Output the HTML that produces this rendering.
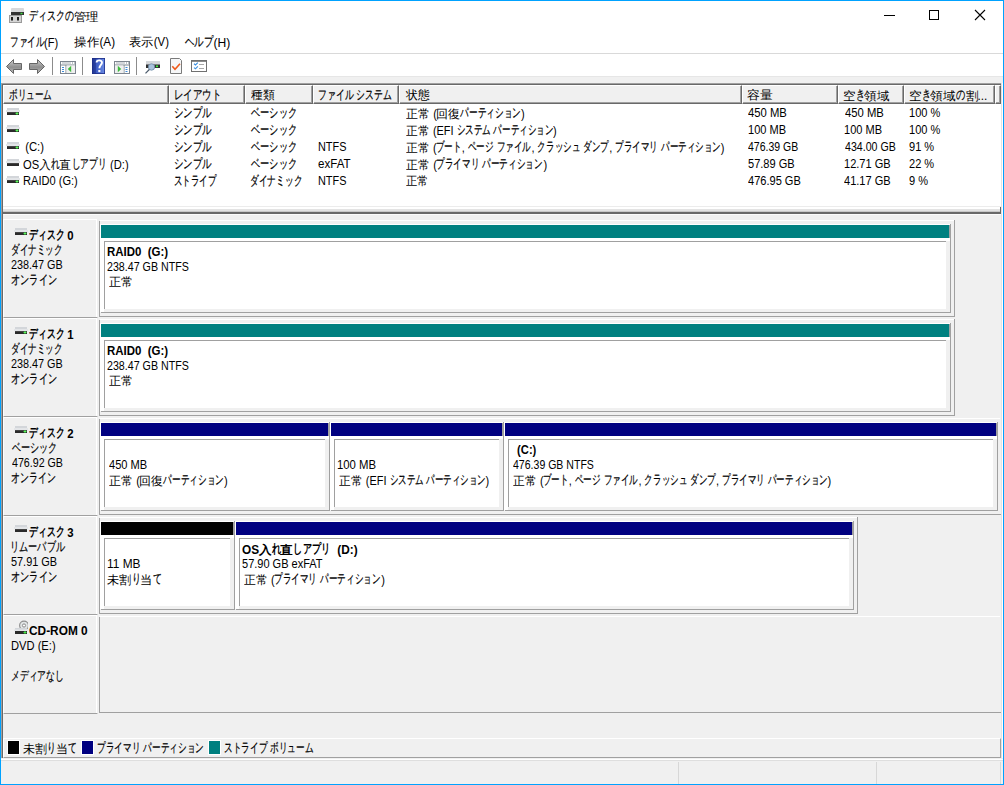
<!DOCTYPE html>
<html><head><meta charset="utf-8"><style>
html,body{margin:0;padding:0}
body{width:1004px;height:785px;position:relative;overflow:hidden;background:#f0f0f0;font-family:"Liberation Sans",sans-serif;font-size:12px;color:#000}
body>div,body>span,body>svg{position:absolute}
.t{position:absolute;white-space:pre;line-height:15px;height:15px;transform-origin:0 0}
.t i{font-style:normal;display:inline-block;transform-origin:0 0}
.t i.k{font-size:13px;-webkit-text-stroke:0.2px #000;position:relative;top:-1px}
.t[style*=bold] i.k,.t[style*=bold] i.h{-webkit-text-stroke:0}
.t i.h{font-size:12px;position:relative;top:0px}
#win{left:0;top:0;width:1004px;height:785px;box-sizing:border-box;border:1px solid #00a2ff;z-index:10;pointer-events:none}
</style></head><body>
<div style="left:1px;top:1px;width:1002px;height:52px;background:#fff"></div>
<div style="left:1px;top:53px;width:1002px;height:1px;background:#d9d9d9"></div>
<div style="left:1px;top:54px;width:1002px;height:22px;background:#fff"></div>
<div style="left:1px;top:76px;width:1002px;height:1px;background:#e6e6e6"></div>
<svg style="position:absolute;left:8px;top:7px" width="18" height="17" viewBox="0 0 18 17">
<rect x="3" y="1" width="13" height="4.5" rx="1" fill="#d8d9db"/>
<rect x="3" y="5" width="13" height="3" fill="#333"/>
<rect x="12.5" y="5.8" width="2" height="1.4" fill="#3fe03f"/>
<rect x="1.5" y="8.5" width="12" height="7" fill="#d4d4d4" stroke="#9a9a9a" stroke-width="1"/>
<rect x="3" y="10" width="2" height="3.5" fill="#1e1e1e"/>
<rect x="9" y="10" width="2" height="3.5" fill="#1e1e1e"/>
</svg>
<span class="t" style="left:29.30px;top:9px;transform:scaleX(1.0466);"><i class="k" style="transform:scaleX(0.6615);margin-right:-22.00px">ディスクの</i><i class="h" style="transform:scaleX(0.9833);margin-right:-0.40px">管理</i></span>
<div style="left:884px;top:15px;width:11px;height:1px;background:#000"></div>
<div style="left:929px;top:10px;width:8px;height:8px;border:1px solid #000;background:transparent"></div>
<svg style="position:absolute;left:974px;top:9px" width="12" height="12" viewBox="0 0 12 12">
<path d="M1 1 L11 11 M11 1 L1 11" stroke="#000" stroke-width="1.1"/></svg>
<span class="t" style="left:10.30px;top:35px;transform:scaleX(1.0005);"><i class="k" style="transform:scaleX(0.6615);margin-right:-17.60px">ファイル</i><i style="transform:scaleX(0.92);margin-right:-1.23px">(F)</i></span>
<span class="t" style="left:74.16px;top:35px;transform:scaleX(1.0598);"><i class="h" style="transform:scaleX(0.9833);margin-right:-0.40px">操作</i><i style="transform:scaleX(0.92);margin-right:-1.28px">(A)</i></span>
<span class="t" style="left:129.46px;top:35px;transform:scaleX(1.0328);"><i class="h" style="transform:scaleX(0.9833);margin-right:-0.40px">表示</i><i style="transform:scaleX(0.92);margin-right:-1.28px">(V)</i></span>
<span class="t" style="left:185.30px;top:35px;transform:scaleX(1.0978);"><i class="k" style="transform:scaleX(0.6615);margin-right:-13.20px">ヘルプ</i><i style="transform:scaleX(0.92);margin-right:-1.33px">(H)</i></span>
<div style="left:1px;top:83px;width:1002px;height:1px;background:#a0a0a0"></div>
<div style="left:2px;top:84px;width:1000px;height:1px;background:#696969"></div>
<div style="left:1px;top:83px;width:1px;height:675px;background:#a0a0a0"></div>
<div style="left:2px;top:84px;width:1px;height:674px;background:#696969"></div>
<div style="left:1001px;top:83px;width:1px;height:675px;background:#e3e3e3"></div>
<div style="left:1002px;top:83px;width:1px;height:675px;background:#fff"></div>
<div style="left:3px;top:85px;width:998px;height:121px;background:#fff"></div>
<div style="left:3px;top:85px;width:166px;height:19px;box-sizing:border-box;background:#f0f0f0;border-top:1px solid #fff;border-left:1px solid #fff;border-right:1px solid #696969;border-bottom:1px solid #696969;box-shadow:inset -1px -1px 0 #a0a0a0"></div>
<div style="left:169px;top:85px;width:76px;height:19px;box-sizing:border-box;background:#f0f0f0;border-top:1px solid #fff;border-left:1px solid #fff;border-right:1px solid #696969;border-bottom:1px solid #696969;box-shadow:inset -1px -1px 0 #a0a0a0"></div>
<div style="left:245px;top:85px;width:68px;height:19px;box-sizing:border-box;background:#f0f0f0;border-top:1px solid #fff;border-left:1px solid #fff;border-right:1px solid #696969;border-bottom:1px solid #696969;box-shadow:inset -1px -1px 0 #a0a0a0"></div>
<div style="left:313px;top:85px;width:86px;height:19px;box-sizing:border-box;background:#f0f0f0;border-top:1px solid #fff;border-left:1px solid #fff;border-right:1px solid #696969;border-bottom:1px solid #696969;box-shadow:inset -1px -1px 0 #a0a0a0"></div>
<div style="left:399px;top:85px;width:343px;height:19px;box-sizing:border-box;background:#f0f0f0;border-top:1px solid #fff;border-left:1px solid #fff;border-right:1px solid #696969;border-bottom:1px solid #696969;box-shadow:inset -1px -1px 0 #a0a0a0"></div>
<div style="left:742px;top:85px;width:96px;height:19px;box-sizing:border-box;background:#f0f0f0;border-top:1px solid #fff;border-left:1px solid #fff;border-right:1px solid #696969;border-bottom:1px solid #696969;box-shadow:inset -1px -1px 0 #a0a0a0"></div>
<div style="left:838px;top:85px;width:66px;height:19px;box-sizing:border-box;background:#f0f0f0;border-top:1px solid #fff;border-left:1px solid #fff;border-right:1px solid #696969;border-bottom:1px solid #696969;box-shadow:inset -1px -1px 0 #a0a0a0"></div>
<div style="left:904px;top:85px;width:91px;height:19px;box-sizing:border-box;background:#f0f0f0;border-top:1px solid #fff;border-left:1px solid #fff;border-right:1px solid #696969;border-bottom:1px solid #696969;box-shadow:inset -1px -1px 0 #a0a0a0"></div>
<div style="left:995px;top:85px;width:6px;height:19px;box-sizing:border-box;background:#f0f0f0;border-top:1px solid #fff;border-left:1px solid #fff;border-right:1px solid #696969;border-bottom:1px solid #696969;box-shadow:inset -1px -1px 0 #a0a0a0"></div>
<span class="t" style="left:9.00px;top:88px;"><i class="k" style="transform:scaleX(0.6615);margin-right:-22.00px">ボリューム</i></span>
<span class="t" style="left:174.30px;top:88px;transform:scaleX(1.1003);"><i class="k" style="transform:scaleX(0.6615);margin-right:-22.00px">レイアウト</i></span>
<span class="t" style="left:251.00px;top:88px;transform:scaleX(1.0009);"><i class="h" style="transform:scaleX(0.9833);margin-right:-0.40px">種類</i></span>
<span class="t" style="left:318.30px;top:88px;transform:scaleX(1.0286);"><i class="k" style="transform:scaleX(0.6615);margin-right:-17.60px">ファイル</i><i style="transform:scaleX(0.92);margin-right:-0.27px"> </i><i class="k" style="transform:scaleX(0.6615);margin-right:-17.60px">システム</i></span>
<span class="t" style="left:405.70px;top:88px;"><i class="h" style="transform:scaleX(0.9833);margin-right:-0.40px">状態</i></span>
<span class="t" style="left:747.44px;top:88px;transform:scaleX(1.0919);"><i class="h" style="transform:scaleX(0.9833);margin-right:-0.40px">容量</i></span>
<span class="t" style="left:843.30px;top:88px;transform:scaleX(1.0621);"><i class="h" style="transform:scaleX(0.9833);margin-right:-0.20px">空</i><i class="k" style="transform:scaleX(0.6615);margin-right:-4.40px">き</i><i class="h" style="transform:scaleX(0.9833);margin-right:-0.40px">領域</i></span>
<span class="t" style="left:909.30px;top:88px;transform:scaleX(1.0704);"><i class="h" style="transform:scaleX(0.9833);margin-right:-0.20px">空</i><i class="k" style="transform:scaleX(0.6615);margin-right:-4.40px">き</i><i class="h" style="transform:scaleX(0.9833);margin-right:-0.40px">領域</i><i class="k" style="transform:scaleX(0.6615);margin-right:-4.40px">の</i><i class="h" style="transform:scaleX(0.9833);margin-right:-0.20px">割</i><i style="transform:scaleX(0.92);margin-right:-0.80px">...</i></span>
<svg style="position:absolute;left:6px;top:108px" width="14" height="8" viewBox="0 0 14 8">
<rect x="1" y="0" width="12" height="3" fill="#d3d6da"/>
<rect x="0" y="2" width="14" height="2" fill="#e3e5e8"/>
<rect x="1" y="4" width="12" height="3" fill="#2a2a2a"/>
<rect x="1" y="4" width="12" height="1" fill="#444"/><rect x="9.5" y="5" width="3" height="1" fill="#44e544"/><rect x="10.5" y="4" width="1" height="3" fill="#44e544"/><rect x="10.5" y="5" width="1" height="1" fill="#7dff7d"/></svg>
<span class="t" style="left:174.30px;top:106px;transform:scaleX(1.1031);"><i class="k" style="transform:scaleX(0.6615);margin-right:-17.60px">シンプル</i></span>
<span class="t" style="left:251.00px;top:106px;transform:scaleX(1.0737);"><i class="k" style="transform:scaleX(0.6615);margin-right:-22.00px">ベーシック</i></span>
<span class="t" style="left:405.70px;top:106px;transform:scaleX(1.0085);"><i class="h" style="transform:scaleX(0.9833);margin-right:-0.40px">正常</i><i style="transform:scaleX(0.92);margin-right:-0.59px"> (</i><i class="h" style="transform:scaleX(0.9833);margin-right:-0.40px">回復</i><i class="k" style="transform:scaleX(0.6615);margin-right:-30.80px">パーティション</i><i style="transform:scaleX(0.92);margin-right:-0.32px">)</i></span>
<span class="t" style="left:748.14px;top:106px;transform:scaleX(1.0219);"><i style="transform:scaleX(0.92);margin-right:-3.31px">450 MB</i></span>
<span class="t" style="left:844.70px;top:106px;transform:scaleX(1.0219);"><i style="transform:scaleX(0.92);margin-right:-3.31px">450 MB</i></span>
<span class="t" style="left:909.30px;top:106px;"><i style="transform:scaleX(0.92);margin-right:-2.72px">100 %</i></span>
<svg style="position:absolute;left:6px;top:125px" width="14" height="8" viewBox="0 0 14 8">
<rect x="1" y="0" width="12" height="3" fill="#d3d6da"/>
<rect x="0" y="2" width="14" height="2" fill="#e3e5e8"/>
<rect x="1" y="4" width="12" height="3" fill="#2a2a2a"/>
<rect x="1" y="4" width="12" height="1" fill="#444"/><rect x="9.5" y="5" width="3" height="1" fill="#44e544"/><rect x="10.5" y="4" width="1" height="3" fill="#44e544"/><rect x="10.5" y="5" width="1" height="1" fill="#7dff7d"/></svg>
<span class="t" style="left:174.30px;top:123px;transform:scaleX(1.1031);"><i class="k" style="transform:scaleX(0.6615);margin-right:-17.60px">シンプル</i></span>
<span class="t" style="left:251.00px;top:123px;transform:scaleX(1.0737);"><i class="k" style="transform:scaleX(0.6615);margin-right:-22.00px">ベーシック</i></span>
<span class="t" style="left:405.70px;top:123px;transform:scaleX(0.9934);"><i class="h" style="transform:scaleX(0.9833);margin-right:-0.40px">正常</i><i style="transform:scaleX(0.92);margin-right:-2.35px"> (EFI </i><i class="k" style="transform:scaleX(0.6615);margin-right:-17.60px">システム</i><i style="transform:scaleX(0.92);margin-right:-0.27px"> </i><i class="k" style="transform:scaleX(0.6615);margin-right:-30.80px">パーティション</i><i style="transform:scaleX(0.92);margin-right:-0.32px">)</i></span>
<span class="t" style="left:747.91px;top:123px;"><i style="transform:scaleX(0.92);margin-right:-3.31px">100 MB</i></span>
<span class="t" style="left:844.23px;top:123px;"><i style="transform:scaleX(0.92);margin-right:-3.31px">100 MB</i></span>
<span class="t" style="left:909.30px;top:123px;"><i style="transform:scaleX(0.92);margin-right:-2.72px">100 %</i></span>
<svg style="position:absolute;left:6px;top:142px" width="14" height="8" viewBox="0 0 14 8">
<rect x="1" y="0" width="12" height="3" fill="#d3d6da"/>
<rect x="0" y="2" width="14" height="2" fill="#e3e5e8"/>
<rect x="1" y="4" width="12" height="3" fill="#2a2a2a"/>
<rect x="1" y="4" width="12" height="1" fill="#444"/><rect x="9.5" y="5" width="3" height="1" fill="#44e544"/><rect x="10.5" y="4" width="1" height="3" fill="#44e544"/><rect x="10.5" y="5" width="1" height="1" fill="#7dff7d"/></svg>
<span class="t" style="left:22.30px;top:140px;transform:scaleX(1.0247);"><i style="transform:scaleX(0.92);margin-right:-1.87px"> (C:)</i></span>
<span class="t" style="left:174.30px;top:140px;transform:scaleX(1.1031);"><i class="k" style="transform:scaleX(0.6615);margin-right:-17.60px">シンプル</i></span>
<span class="t" style="left:251.00px;top:140px;transform:scaleX(1.0737);"><i class="k" style="transform:scaleX(0.6615);margin-right:-22.00px">ベーシック</i></span>
<span class="t" style="left:318.30px;top:140px;transform:scaleX(0.9862);"><i style="transform:scaleX(0.92);margin-right:-2.51px">NTFS</i></span>
<span class="t" style="left:405.70px;top:140px;transform:scaleX(0.9962);"><i class="h" style="transform:scaleX(0.9833);margin-right:-0.40px">正常</i><i style="transform:scaleX(0.92);margin-right:-0.59px"> (</i><i class="k" style="transform:scaleX(0.6615);margin-right:-13.20px">ブート</i><i style="transform:scaleX(0.92);margin-right:-0.53px">, </i><i class="k" style="transform:scaleX(0.6615);margin-right:-13.20px">ページ</i><i style="transform:scaleX(0.92);margin-right:-0.27px"> </i><i class="k" style="transform:scaleX(0.6615);margin-right:-17.60px">ファイル</i><i style="transform:scaleX(0.92);margin-right:-0.53px">, </i><i class="k" style="transform:scaleX(0.6615);margin-right:-22.00px">クラッシュ</i><i style="transform:scaleX(0.92);margin-right:-0.27px"> </i><i class="k" style="transform:scaleX(0.6615);margin-right:-13.20px">ダンプ</i><i style="transform:scaleX(0.92);margin-right:-0.53px">, </i><i class="k" style="transform:scaleX(0.6615);margin-right:-22.00px">プライマリ</i><i style="transform:scaleX(0.92);margin-right:-0.27px"> </i><i class="k" style="transform:scaleX(0.6615);margin-right:-30.80px">パーティション</i><i style="transform:scaleX(0.92);margin-right:-0.32px">)</i></span>
<span class="t" style="left:748.14px;top:140px;transform:scaleX(0.9502);"><i style="transform:scaleX(0.92);margin-right:-4.59px">476.39 GB</i></span>
<span class="t" style="left:844.70px;top:140px;transform:scaleX(0.9615);"><i style="transform:scaleX(0.92);margin-right:-4.59px">434.00 GB</i></span>
<span class="t" style="left:909.30px;top:140px;"><i style="transform:scaleX(0.92);margin-right:-2.19px">91 %</i></span>
<svg style="position:absolute;left:6px;top:159px" width="14" height="8" viewBox="0 0 14 8">
<rect x="1" y="0" width="12" height="3" fill="#d3d6da"/>
<rect x="0" y="2" width="14" height="2" fill="#e3e5e8"/>
<rect x="1" y="4" width="12" height="3" fill="#2a2a2a"/>
<rect x="1" y="4" width="12" height="1" fill="#444"/></svg>
<span class="t" style="left:22.86px;top:157px;transform:scaleX(1.0117);"><i style="transform:scaleX(0.92);margin-right:-1.39px">OS</i><i class="h" style="transform:scaleX(0.9833);margin-right:-0.20px">入</i><i class="k" style="transform:scaleX(0.6615);margin-right:-4.40px">れ</i><i class="h" style="transform:scaleX(0.9833);margin-right:-0.20px">直</i><i class="k" style="transform:scaleX(0.6615);margin-right:-17.60px">しアプリ</i><i style="transform:scaleX(0.92);margin-right:-1.87px"> (D:)</i></span>
<span class="t" style="left:174.30px;top:157px;transform:scaleX(1.1031);"><i class="k" style="transform:scaleX(0.6615);margin-right:-17.60px">シンプル</i></span>
<span class="t" style="left:251.00px;top:157px;transform:scaleX(1.0737);"><i class="k" style="transform:scaleX(0.6615);margin-right:-22.00px">ベーシック</i></span>
<span class="t" style="left:318.30px;top:157px;transform:scaleX(1.0470);"><i style="transform:scaleX(0.92);margin-right:-2.70px">exFAT</i></span>
<span class="t" style="left:405.70px;top:157px;transform:scaleX(1.0029);"><i class="h" style="transform:scaleX(0.9833);margin-right:-0.40px">正常</i><i style="transform:scaleX(0.92);margin-right:-0.59px"> (</i><i class="k" style="transform:scaleX(0.6615);margin-right:-22.00px">プライマリ</i><i style="transform:scaleX(0.92);margin-right:-0.27px"> </i><i class="k" style="transform:scaleX(0.6615);margin-right:-30.80px">パーティション</i><i style="transform:scaleX(0.92);margin-right:-0.32px">)</i></span>
<span class="t" style="left:747.91px;top:157px;"><i style="transform:scaleX(0.92);margin-right:-4.06px">57.89 GB</i></span>
<span class="t" style="left:844.23px;top:157px;"><i style="transform:scaleX(0.92);margin-right:-4.06px">12.71 GB</i></span>
<span class="t" style="left:909.30px;top:157px;"><i style="transform:scaleX(0.92);margin-right:-2.19px">22 %</i></span>
<svg style="position:absolute;left:6px;top:176px" width="14" height="8" viewBox="0 0 14 8">
<rect x="1" y="0" width="12" height="3" fill="#d3d6da"/>
<rect x="0" y="2" width="14" height="2" fill="#e3e5e8"/>
<rect x="1" y="4" width="12" height="3" fill="#2a2a2a"/>
<rect x="1" y="4" width="12" height="1" fill="#444"/><rect x="9.5" y="5" width="3" height="1" fill="#44e544"/><rect x="10.5" y="4" width="1" height="3" fill="#44e544"/><rect x="10.5" y="5" width="1" height="1" fill="#7dff7d"/></svg>
<span class="t" style="left:22.86px;top:174px;transform:scaleX(1.0039);"><i style="transform:scaleX(0.92);margin-right:-4.75px">RAID0 (G:)</i></span>
<span class="t" style="left:174.30px;top:174px;transform:scaleX(0.9857);"><i class="k" style="transform:scaleX(0.6615);margin-right:-22.00px">ストライプ</i></span>
<span class="t" style="left:250.30px;top:174px;transform:scaleX(1.0124);"><i class="k" style="transform:scaleX(0.6615);margin-right:-26.40px">ダイナミック</i></span>
<span class="t" style="left:318.30px;top:174px;transform:scaleX(0.9862);"><i style="transform:scaleX(0.92);margin-right:-2.51px">NTFS</i></span>
<span class="t" style="left:405.70px;top:174px;transform:scaleX(0.9545);"><i class="h" style="transform:scaleX(0.9833);margin-right:-0.40px">正常</i></span>
<span class="t" style="left:747.91px;top:174px;"><i style="transform:scaleX(0.92);margin-right:-4.59px">476.95 GB</i></span>
<span class="t" style="left:844.23px;top:174px;"><i style="transform:scaleX(0.92);margin-right:-4.06px">41.17 GB</i></span>
<span class="t" style="left:909.30px;top:174px;"><i style="transform:scaleX(0.92);margin-right:-1.65px">9 %</i></span>
<div style="left:3px;top:206px;width:998px;height:1px;background:#ececec"></div>
<div style="left:3px;top:207px;width:998px;height:2px;background:#fff"></div>
<div style="left:3px;top:209px;width:998px;height:2px;background:#e3e3e3"></div>
<div style="left:3px;top:211px;width:998px;height:1px;background:#c8c8c8"></div>
<div style="left:3px;top:212px;width:998px;height:2px;background:#696969"></div>
<div style="left:1000px;top:207px;width:1px;height:7px;background:#696969"></div>
<div style="left:3px;top:214px;width:998px;height:1px;background:#fcfcfc"></div>
<div style="left:3px;top:219px;width:95px;height:99px;box-sizing:border-box;background:#f0f0f0;border-top:1px solid #fff;border-left:1px solid #fff;border-right:1px solid #fff;border-bottom:1px solid #a0a0a0"></div>
<div style="left:96px;top:219px;width:2px;height:98px;background:#f0f0f0"></div>
<div style="left:96px;top:219px;width:1px;height:98px;background:#fff"></div>
<div style="left:100px;top:220px;width:854px;height:1px;background:#fff"></div>
<div style="left:99px;top:221px;width:1px;height:96px;background:#a0a0a0"></div>
<div style="left:99px;top:316px;width:856px;height:1px;background:#a0a0a0"></div>
<div style="left:954px;top:220px;width:1px;height:97px;background:#a0a0a0"></div>
<svg style="position:absolute;left:14px;top:228px" width="14" height="8" viewBox="0 0 14 8">
<rect x="1" y="0" width="12" height="3" fill="#d3d6da"/>
<rect x="0" y="2" width="14" height="2" fill="#e3e5e8"/>
<rect x="1" y="4" width="12" height="3" fill="#2a2a2a"/>
<rect x="1" y="4" width="12" height="1" fill="#444"/><rect x="9.5" y="5" width="3" height="1" fill="#44e544"/><rect x="10.5" y="4" width="1" height="3" fill="#44e544"/><rect x="10.5" y="5" width="1" height="1" fill="#7dff7d"/></svg>
<span class="t" style="left:29.44px;top:228px;font-weight:bold;transform:scaleX(1.0288);"><i class="k" style="transform:scaleX(0.6615);margin-right:-17.60px">ディスク</i><i style="transform:scaleX(0.92);margin-right:-0.80px"> 0</i></span>
<span class="t" style="left:10.88px;top:243px;transform:scaleX(0.9961);"><i class="k" style="transform:scaleX(0.6615);margin-right:-26.40px">ダイナミック</i></span>
<span class="t" style="left:10.88px;top:258px;transform:scaleX(0.9806);"><i style="transform:scaleX(0.92);margin-right:-4.59px">238.47 GB</i></span>
<span class="t" style="left:10.88px;top:273px;transform:scaleX(1.0735);"><i class="k" style="transform:scaleX(0.6615);margin-right:-22.00px">オンライン</i></span>
<div style="left:100px;top:224px;width:850px;height:1px;background:#fff"></div>
<div style="left:100px;top:224px;width:1px;height:88px;background:#fff"></div>
<div style="left:101px;top:225px;width:848px;height:13px;background:#008080"></div>
<div style="left:949px;top:225px;width:1px;height:13px;background:#a0a0a0"></div>
<div style="left:950px;top:224px;width:1px;height:89px;background:#a0a0a0"></div>
<div style="left:101px;top:312px;width:850px;height:1px;background:#a0a0a0"></div>
<div style="left:101px;top:238px;width:849px;height:74px;background:#f0f0f0"></div>
<div style="left:101px;top:238px;width:849px;height:3px;background:#fff"></div>
<div style="left:101px;top:238px;width:3px;height:74px;background:#fff"></div>
<div style="left:104px;top:241px;width:842px;height:68px;box-sizing:border-box;background:#fff;border-top:1px solid #a0a0a0;border-left:1px solid #a0a0a0"></div>
<span class="t" style="left:107.16px;top:245px;font-weight:bold;transform:scaleX(1.0387);"><i style="transform:scaleX(0.92);margin-right:-5.12px">RAID0  (G:)</i></span>
<span class="t" style="left:107.16px;top:260px;transform:scaleX(0.9663);"><i style="transform:scaleX(0.92);margin-right:-7.36px">238.47 GB NTFS</i></span>
<span class="t" style="left:108.56px;top:275px;transform:scaleX(1.0189);"><i class="h" style="transform:scaleX(0.9833);margin-right:-0.40px">正常</i></span>
<div style="left:3px;top:318px;width:95px;height:99px;box-sizing:border-box;background:#f0f0f0;border-top:1px solid #fff;border-left:1px solid #fff;border-right:1px solid #fff;border-bottom:1px solid #a0a0a0"></div>
<div style="left:96px;top:318px;width:2px;height:98px;background:#f0f0f0"></div>
<div style="left:96px;top:318px;width:1px;height:98px;background:#fff"></div>
<div style="left:100px;top:319px;width:854px;height:1px;background:#fff"></div>
<div style="left:99px;top:320px;width:1px;height:96px;background:#a0a0a0"></div>
<div style="left:99px;top:415px;width:856px;height:1px;background:#a0a0a0"></div>
<div style="left:954px;top:319px;width:1px;height:97px;background:#a0a0a0"></div>
<svg style="position:absolute;left:14px;top:327px" width="14" height="8" viewBox="0 0 14 8">
<rect x="1" y="0" width="12" height="3" fill="#d3d6da"/>
<rect x="0" y="2" width="14" height="2" fill="#e3e5e8"/>
<rect x="1" y="4" width="12" height="3" fill="#2a2a2a"/>
<rect x="1" y="4" width="12" height="1" fill="#444"/><rect x="9.5" y="5" width="3" height="1" fill="#44e544"/><rect x="10.5" y="4" width="1" height="3" fill="#44e544"/><rect x="10.5" y="5" width="1" height="1" fill="#7dff7d"/></svg>
<span class="t" style="left:29.44px;top:327px;font-weight:bold;transform:scaleX(1.0294);"><i class="k" style="transform:scaleX(0.6615);margin-right:-17.60px">ディスク</i><i style="transform:scaleX(0.92);margin-right:-0.80px"> 1</i></span>
<span class="t" style="left:10.88px;top:342px;transform:scaleX(0.9961);"><i class="k" style="transform:scaleX(0.6615);margin-right:-26.40px">ダイナミック</i></span>
<span class="t" style="left:10.88px;top:357px;transform:scaleX(0.9806);"><i style="transform:scaleX(0.92);margin-right:-4.59px">238.47 GB</i></span>
<span class="t" style="left:10.88px;top:372px;transform:scaleX(1.0735);"><i class="k" style="transform:scaleX(0.6615);margin-right:-22.00px">オンライン</i></span>
<div style="left:100px;top:323px;width:850px;height:1px;background:#fff"></div>
<div style="left:100px;top:323px;width:1px;height:88px;background:#fff"></div>
<div style="left:101px;top:324px;width:848px;height:13px;background:#008080"></div>
<div style="left:949px;top:324px;width:1px;height:13px;background:#a0a0a0"></div>
<div style="left:950px;top:323px;width:1px;height:89px;background:#a0a0a0"></div>
<div style="left:101px;top:411px;width:850px;height:1px;background:#a0a0a0"></div>
<div style="left:101px;top:337px;width:849px;height:74px;background:#f0f0f0"></div>
<div style="left:101px;top:337px;width:849px;height:3px;background:#fff"></div>
<div style="left:101px;top:337px;width:3px;height:74px;background:#fff"></div>
<div style="left:104px;top:340px;width:842px;height:68px;box-sizing:border-box;background:#fff;border-top:1px solid #a0a0a0;border-left:1px solid #a0a0a0"></div>
<span class="t" style="left:107.16px;top:344px;font-weight:bold;transform:scaleX(1.0387);"><i style="transform:scaleX(0.92);margin-right:-5.12px">RAID0  (G:)</i></span>
<span class="t" style="left:107.16px;top:359px;transform:scaleX(0.9663);"><i style="transform:scaleX(0.92);margin-right:-7.36px">238.47 GB NTFS</i></span>
<span class="t" style="left:108.56px;top:374px;transform:scaleX(1.0189);"><i class="h" style="transform:scaleX(0.9833);margin-right:-0.40px">正常</i></span>
<div style="left:3px;top:417px;width:95px;height:99px;box-sizing:border-box;background:#f0f0f0;border-top:1px solid #fff;border-left:1px solid #fff;border-right:1px solid #fff;border-bottom:1px solid #a0a0a0"></div>
<div style="left:96px;top:417px;width:2px;height:98px;background:#f0f0f0"></div>
<div style="left:96px;top:417px;width:1px;height:98px;background:#fff"></div>
<div style="left:100px;top:418px;width:900px;height:1px;background:#fff"></div>
<div style="left:99px;top:419px;width:1px;height:96px;background:#a0a0a0"></div>
<div style="left:99px;top:514px;width:902px;height:1px;background:#a0a0a0"></div>
<svg style="position:absolute;left:14px;top:426px" width="14" height="8" viewBox="0 0 14 8">
<rect x="1" y="0" width="12" height="3" fill="#d3d6da"/>
<rect x="0" y="2" width="14" height="2" fill="#e3e5e8"/>
<rect x="1" y="4" width="12" height="3" fill="#2a2a2a"/>
<rect x="1" y="4" width="12" height="1" fill="#444"/><rect x="9.5" y="5" width="3" height="1" fill="#44e544"/><rect x="10.5" y="4" width="1" height="3" fill="#44e544"/><rect x="10.5" y="5" width="1" height="1" fill="#7dff7d"/></svg>
<span class="t" style="left:29.44px;top:426px;font-weight:bold;transform:scaleX(1.0288);"><i class="k" style="transform:scaleX(0.6615);margin-right:-17.60px">ディスク</i><i style="transform:scaleX(0.92);margin-right:-0.80px"> 2</i></span>
<span class="t" style="left:12.28px;top:441px;transform:scaleX(1.0591);"><i class="k" style="transform:scaleX(0.6615);margin-right:-22.00px">ベーシック</i></span>
<span class="t" style="left:12.28px;top:456px;transform:scaleX(0.9655);"><i style="transform:scaleX(0.92);margin-right:-4.59px">476.92 GB</i></span>
<span class="t" style="left:10.88px;top:471px;transform:scaleX(1.0441);"><i class="k" style="transform:scaleX(0.6615);margin-right:-22.00px">オンライン</i></span>
<div style="left:100px;top:422px;width:229px;height:1px;background:#fff"></div>
<div style="left:100px;top:422px;width:1px;height:88px;background:#fff"></div>
<div style="left:101px;top:423px;width:227px;height:13px;background:#000080"></div>
<div style="left:328px;top:423px;width:1px;height:13px;background:#a0a0a0"></div>
<div style="left:329px;top:422px;width:1px;height:89px;background:#a0a0a0"></div>
<div style="left:101px;top:510px;width:229px;height:1px;background:#a0a0a0"></div>
<div style="left:101px;top:436px;width:228px;height:74px;background:#f0f0f0"></div>
<div style="left:101px;top:436px;width:228px;height:3px;background:#fff"></div>
<div style="left:101px;top:436px;width:3px;height:74px;background:#fff"></div>
<div style="left:104px;top:439px;width:221px;height:68px;box-sizing:border-box;background:#fff;border-top:1px solid #a0a0a0;border-left:1px solid #a0a0a0"></div>
<span class="t" style="left:108.56px;top:458px;transform:scaleX(1.0056);"><i style="transform:scaleX(0.92);margin-right:-3.31px">450 MB</i></span>
<span class="t" style="left:108.56px;top:473px;transform:scaleX(1.0085);"><i class="h" style="transform:scaleX(0.9833);margin-right:-0.40px">正常</i><i style="transform:scaleX(0.92);margin-right:-0.59px"> (</i><i class="h" style="transform:scaleX(0.9833);margin-right:-0.40px">回復</i><i class="k" style="transform:scaleX(0.6615);margin-right:-30.80px">パーティション</i><i style="transform:scaleX(0.92);margin-right:-0.32px">)</i></span>
<div style="left:330px;top:422px;width:173px;height:1px;background:#fff"></div>
<div style="left:330px;top:422px;width:1px;height:88px;background:#fff"></div>
<div style="left:331px;top:423px;width:171px;height:13px;background:#000080"></div>
<div style="left:502px;top:423px;width:1px;height:13px;background:#a0a0a0"></div>
<div style="left:503px;top:422px;width:1px;height:89px;background:#a0a0a0"></div>
<div style="left:331px;top:510px;width:173px;height:1px;background:#a0a0a0"></div>
<div style="left:331px;top:436px;width:172px;height:74px;background:#f0f0f0"></div>
<div style="left:331px;top:436px;width:172px;height:3px;background:#fff"></div>
<div style="left:331px;top:436px;width:3px;height:74px;background:#fff"></div>
<div style="left:334px;top:439px;width:165px;height:68px;box-sizing:border-box;background:#fff;border-top:1px solid #a0a0a0;border-left:1px solid #a0a0a0"></div>
<span class="t" style="left:337.16px;top:458px;transform:scaleX(1.0281);"><i style="transform:scaleX(0.92);margin-right:-3.31px">100 MB</i></span>
<span class="t" style="left:338.56px;top:473px;transform:scaleX(0.9907);"><i class="h" style="transform:scaleX(0.9833);margin-right:-0.40px">正常</i><i style="transform:scaleX(0.92);margin-right:-2.35px"> (EFI </i><i class="k" style="transform:scaleX(0.6615);margin-right:-17.60px">システム</i><i style="transform:scaleX(0.92);margin-right:-0.27px"> </i><i class="k" style="transform:scaleX(0.6615);margin-right:-30.80px">パーティション</i><i style="transform:scaleX(0.92);margin-right:-0.32px">)</i></span>
<div style="left:504px;top:422px;width:493px;height:1px;background:#fff"></div>
<div style="left:504px;top:422px;width:1px;height:88px;background:#fff"></div>
<div style="left:505px;top:423px;width:491px;height:13px;background:#000080"></div>
<div style="left:996px;top:423px;width:1px;height:13px;background:#a0a0a0"></div>
<div style="left:997px;top:422px;width:1px;height:89px;background:#a0a0a0"></div>
<div style="left:505px;top:510px;width:493px;height:1px;background:#a0a0a0"></div>
<div style="left:505px;top:436px;width:492px;height:74px;background:#f0f0f0"></div>
<div style="left:505px;top:436px;width:492px;height:3px;background:#fff"></div>
<div style="left:505px;top:436px;width:3px;height:74px;background:#fff"></div>
<div style="left:508px;top:439px;width:485px;height:68px;box-sizing:border-box;background:#fff;border-top:1px solid #a0a0a0;border-left:1px solid #a0a0a0"></div>
<span class="t" style="left:514.38px;top:443px;font-weight:bold;transform:scaleX(1.0125);"><i style="transform:scaleX(0.92);margin-right:-1.92px"> (C:)</i></span>
<span class="t" style="left:512.56px;top:458px;transform:scaleX(0.9548);"><i style="transform:scaleX(0.92);margin-right:-7.36px">476.39 GB NTFS</i></span>
<span class="t" style="left:512.56px;top:473px;transform:scaleX(0.9956);"><i class="h" style="transform:scaleX(0.9833);margin-right:-0.40px">正常</i><i style="transform:scaleX(0.92);margin-right:-0.59px"> (</i><i class="k" style="transform:scaleX(0.6615);margin-right:-13.20px">ブート</i><i style="transform:scaleX(0.92);margin-right:-0.53px">, </i><i class="k" style="transform:scaleX(0.6615);margin-right:-13.20px">ページ</i><i style="transform:scaleX(0.92);margin-right:-0.27px"> </i><i class="k" style="transform:scaleX(0.6615);margin-right:-17.60px">ファイル</i><i style="transform:scaleX(0.92);margin-right:-0.53px">, </i><i class="k" style="transform:scaleX(0.6615);margin-right:-22.00px">クラッシュ</i><i style="transform:scaleX(0.92);margin-right:-0.27px"> </i><i class="k" style="transform:scaleX(0.6615);margin-right:-13.20px">ダンプ</i><i style="transform:scaleX(0.92);margin-right:-0.53px">, </i><i class="k" style="transform:scaleX(0.6615);margin-right:-22.00px">プライマリ</i><i style="transform:scaleX(0.92);margin-right:-0.27px"> </i><i class="k" style="transform:scaleX(0.6615);margin-right:-30.80px">パーティション</i><i style="transform:scaleX(0.92);margin-right:-0.32px">)</i></span>
<div style="left:3px;top:516px;width:95px;height:99px;box-sizing:border-box;background:#f0f0f0;border-top:1px solid #fff;border-left:1px solid #fff;border-right:1px solid #fff;border-bottom:1px solid #a0a0a0"></div>
<div style="left:96px;top:516px;width:2px;height:98px;background:#f0f0f0"></div>
<div style="left:96px;top:516px;width:1px;height:98px;background:#fff"></div>
<div style="left:100px;top:517px;width:757px;height:1px;background:#fff"></div>
<div style="left:99px;top:518px;width:1px;height:96px;background:#a0a0a0"></div>
<div style="left:99px;top:613px;width:759px;height:1px;background:#a0a0a0"></div>
<div style="left:857px;top:517px;width:1px;height:97px;background:#a0a0a0"></div>
<svg style="position:absolute;left:14px;top:525px" width="14" height="8" viewBox="0 0 14 8">
<rect x="1" y="0" width="12" height="3" fill="#d3d6da"/>
<rect x="0" y="2" width="14" height="2" fill="#e3e5e8"/>
<rect x="1" y="4" width="12" height="3" fill="#2a2a2a"/>
<rect x="1" y="4" width="12" height="1" fill="#444"/></svg>
<span class="t" style="left:29.44px;top:525px;font-weight:bold;transform:scaleX(1.0288);"><i class="k" style="transform:scaleX(0.6615);margin-right:-17.60px">ディスク</i><i style="transform:scaleX(0.92);margin-right:-0.80px"> 3</i></span>
<span class="t" style="left:10.18px;top:540px;transform:scaleX(1.0614);"><i class="k" style="transform:scaleX(0.6615);margin-right:-26.40px">リムーバブル</i></span>
<span class="t" style="left:10.88px;top:555px;transform:scaleX(0.9868);"><i style="transform:scaleX(0.92);margin-right:-4.06px">57.91 GB</i></span>
<span class="t" style="left:10.88px;top:570px;transform:scaleX(1.0735);"><i class="k" style="transform:scaleX(0.6615);margin-right:-22.00px">オンライン</i></span>
<div style="left:100px;top:521px;width:134px;height:1px;background:#fff"></div>
<div style="left:100px;top:521px;width:1px;height:88px;background:#fff"></div>
<div style="left:101px;top:522px;width:132px;height:13px;background:#000000"></div>
<div style="left:233px;top:522px;width:1px;height:13px;background:#a0a0a0"></div>
<div style="left:234px;top:521px;width:1px;height:89px;background:#a0a0a0"></div>
<div style="left:101px;top:609px;width:134px;height:1px;background:#a0a0a0"></div>
<div style="left:101px;top:535px;width:133px;height:74px;background:#f0f0f0"></div>
<div style="left:101px;top:535px;width:133px;height:3px;background:#fff"></div>
<div style="left:101px;top:535px;width:3px;height:74px;background:#fff"></div>
<div style="left:104px;top:538px;width:126px;height:68px;box-sizing:border-box;background:#fff;border-top:1px solid #a0a0a0;border-left:1px solid #a0a0a0"></div>
<span class="t" style="left:107.16px;top:557px;transform:scaleX(1.0761);"><i style="transform:scaleX(0.92);margin-right:-2.70px">11 MB</i></span>
<span class="t" style="left:107.16px;top:572px;transform:scaleX(1.0392);"><i class="h" style="transform:scaleX(0.9833);margin-right:-0.40px">未割</i><i class="k" style="transform:scaleX(0.6615);margin-right:-4.40px">り</i><i class="h" style="transform:scaleX(0.9833);margin-right:-0.20px">当</i><i class="k" style="transform:scaleX(0.6615);margin-right:-4.40px">て</i></span>
<div style="left:235px;top:521px;width:618px;height:1px;background:#fff"></div>
<div style="left:235px;top:521px;width:1px;height:88px;background:#fff"></div>
<div style="left:236px;top:522px;width:616px;height:13px;background:#000080"></div>
<div style="left:852px;top:522px;width:1px;height:13px;background:#a0a0a0"></div>
<div style="left:853px;top:521px;width:1px;height:89px;background:#a0a0a0"></div>
<div style="left:236px;top:609px;width:618px;height:1px;background:#a0a0a0"></div>
<div style="left:236px;top:535px;width:617px;height:74px;background:#f0f0f0"></div>
<div style="left:236px;top:535px;width:617px;height:3px;background:#fff"></div>
<div style="left:236px;top:535px;width:3px;height:74px;background:#fff"></div>
<div style="left:239px;top:538px;width:610px;height:68px;box-sizing:border-box;background:#fff;border-top:1px solid #a0a0a0;border-left:1px solid #a0a0a0"></div>
<span class="t" style="left:242.16px;top:542px;font-weight:bold;transform:scaleX(1.0692);"><i style="transform:scaleX(0.92);margin-right:-1.39px">OS</i><i class="h" style="transform:scaleX(0.9833);margin-right:-0.20px">入</i><i class="k" style="transform:scaleX(0.6615);margin-right:-4.40px">れ</i><i class="h" style="transform:scaleX(0.9833);margin-right:-0.20px">直</i><i class="k" style="transform:scaleX(0.6615);margin-right:-17.60px">しアプリ</i><i style="transform:scaleX(0.92);margin-right:-2.19px">  (D:)</i></span>
<span class="t" style="left:242.16px;top:557px;transform:scaleX(0.9976);"><i style="transform:scaleX(0.92);margin-right:-7.03px">57.90 GB exFAT</i></span>
<span class="t" style="left:243.56px;top:572px;transform:scaleX(1.0014);"><i class="h" style="transform:scaleX(0.9833);margin-right:-0.40px">正常</i><i style="transform:scaleX(0.92);margin-right:-0.59px"> (</i><i class="k" style="transform:scaleX(0.6615);margin-right:-22.00px">プライマリ</i><i style="transform:scaleX(0.92);margin-right:-0.27px"> </i><i class="k" style="transform:scaleX(0.6615);margin-right:-30.80px">パーティション</i><i style="transform:scaleX(0.92);margin-right:-0.32px">)</i></span>
<div style="left:3px;top:615px;width:95px;height:99px;box-sizing:border-box;background:#f0f0f0;border-top:1px solid #fff;border-left:1px solid #fff;border-right:1px solid #fff;border-bottom:1px solid #a0a0a0"></div>
<div style="left:96px;top:615px;width:2px;height:98px;background:#f0f0f0"></div>
<div style="left:96px;top:615px;width:1px;height:98px;background:#fff"></div>
<div style="left:100px;top:616px;width:900px;height:1px;background:#fff"></div>
<div style="left:99px;top:617px;width:1px;height:96px;background:#a0a0a0"></div>
<div style="left:99px;top:712px;width:902px;height:1px;background:#a0a0a0"></div>
<svg style="position:absolute;left:14px;top:620px" width="14" height="17" viewBox="0 0 14 17">
<circle cx="10" cy="5.5" r="4.4" fill="#e2e6e6" stroke="#8f8f8f" stroke-width="1.1"/>
<circle cx="10" cy="5.5" r="1.6" fill="#fff" stroke="#8a8a8a" stroke-width="1"/>
<rect x="1" y="8" width="12" height="3" fill="#d3d6da"/>
<rect x="0" y="9.5" width="14" height="1.5" fill="#e3e5e8"/>
<rect x="1" y="11" width="12" height="3" fill="#2a2a2a"/>
<rect x="9.5" y="12" width="3" height="1" fill="#44e544"/><rect x="10.5" y="11" width="1" height="3" fill="#44e544"/></svg>
<span class="t" style="left:29.44px;top:624px;font-weight:bold;transform:scaleX(1.0755);"><i style="transform:scaleX(0.92);margin-right:-4.75px">CD-ROM 0</i></span>
<span class="t" style="left:10.88px;top:639px;transform:scaleX(1.0097);"><i style="transform:scaleX(0.92);margin-right:-3.84px">DVD (E:)</i></span>
<span class="t" style="left:10.88px;top:669px;transform:scaleX(1.0247);"><i class="k" style="transform:scaleX(0.6615);margin-right:-26.40px">メディアなし</i></span>
<div style="left:3px;top:738px;width:998px;height:20px;box-sizing:border-box;background:#f0f0f0;border-top:1px solid #fff;border-left:1px solid #fff;border-right:1px solid #a0a0a0;border-bottom:1px solid #a0a0a0"></div>
<div style="left:7px;top:740px;width:13px;height:15px;background:#fff"></div>
<div style="left:8px;top:741px;width:11px;height:13px;background:#000"></div>
<div style="left:81px;top:740px;width:13px;height:15px;background:#fff"></div>
<div style="left:82px;top:741px;width:11px;height:13px;background:#000080"></div>
<div style="left:208px;top:740px;width:13px;height:15px;background:#fff"></div>
<div style="left:209px;top:741px;width:11px;height:13px;background:#008080"></div>
<span class="t" style="left:23.30px;top:741px;transform:scaleX(1.0196);"><i class="h" style="transform:scaleX(0.9833);margin-right:-0.40px">未割</i><i class="k" style="transform:scaleX(0.6615);margin-right:-4.40px">り</i><i class="h" style="transform:scaleX(0.9833);margin-right:-0.20px">当</i><i class="k" style="transform:scaleX(0.6615);margin-right:-4.40px">て</i></span>
<span class="t" style="left:97.30px;top:741px;transform:scaleX(1.0057);"><i class="k" style="transform:scaleX(0.6615);margin-right:-22.00px">プライマリ</i><i style="transform:scaleX(0.92);margin-right:-0.27px"> </i><i class="k" style="transform:scaleX(0.6615);margin-right:-30.80px">パーティション</i></span>
<span class="t" style="left:223.74px;top:741px;transform:scaleX(1.0047);"><i class="k" style="transform:scaleX(0.6615);margin-right:-22.00px">ストライプ</i><i style="transform:scaleX(0.92);margin-right:-0.27px"> </i><i class="k" style="transform:scaleX(0.6615);margin-right:-22.00px">ボリューム</i></span>
<div style="left:1px;top:759px;width:1002px;height:1px;background:#fff"></div>
<div style="left:1px;top:760px;width:1002px;height:1px;background:#dedede"></div>
<div style="left:678px;top:762px;width:1px;height:22px;background:#d7d7d7"></div>
<div style="left:876px;top:762px;width:1px;height:22px;background:#d7d7d7"></div>
<div style="left:1000px;top:762px;width:1px;height:22px;background:#d7d7d7"></div>
<svg style="position:absolute;left:0;top:54px" width="220" height="22" viewBox="0 54 220 22">
<defs>
<linearGradient id="ag" x1="0" y1="0" x2="0" y2="1"><stop offset="0" stop-color="#cfcfcf"/><stop offset="0.55" stop-color="#8f8f8f"/><stop offset="1" stop-color="#bdbdbd"/></linearGradient>
<linearGradient id="hb" x1="0" y1="0" x2="1" y2="0"><stop offset="0" stop-color="#23379a"/><stop offset="0.3" stop-color="#3a58c0"/><stop offset="1" stop-color="#6d8ee6"/></linearGradient>
</defs>
<path d="M6.5 66.5 L13.5 59.5 L13.5 63.5 L21.5 63.5 L21.5 69.5 L13.5 69.5 L13.5 73.5 Z" fill="url(#ag)" stroke="#666" stroke-width="1" stroke-linejoin="round"/>
<path d="M44.5 66.5 L37.5 59.5 L37.5 63.5 L29.5 63.5 L29.5 69.5 L37.5 69.5 L37.5 73.5 Z" fill="url(#ag)" stroke="#666" stroke-width="1" stroke-linejoin="round"/>
<rect x="52" y="57" width="1" height="18" fill="#8c8c8c"/>
<rect x="82" y="57" width="1" height="18" fill="#8c8c8c"/>
<rect x="136" y="57" width="1" height="18" fill="#8c8c8c"/>
<!-- icon 3 -->
<rect x="60.5" y="61.5" width="15" height="12" fill="#fff" stroke="#7d858f" stroke-width="1"/>
<rect x="62" y="62.5" width="9" height="1" fill="#aab0b8"/><rect x="72" y="62.5" width="1" height="1" fill="#7d858f"/><rect x="74" y="62.5" width="1" height="1" fill="#7d858f"/>
<rect x="60.5" y="64.5" width="15" height="1" fill="#7d858f"/>
<rect x="65.5" y="65" width="1" height="8.5" fill="#7d858f"/>
<rect x="62" y="67" width="2" height="1" fill="#3d8ad8"/><rect x="62" y="69" width="2" height="1" fill="#3d8ad8"/><rect x="62" y="71" width="2" height="1" fill="#3d8ad8"/>
<rect x="66.5" y="65.5" width="8.5" height="7.5" fill="#f0f0f0"/>
<path d="M67.8 69 L71.2 65.8 L71.2 72.2 Z" fill="#3cb93c"/>
<!-- help -->
<rect x="92" y="58" width="13" height="16" fill="url(#hb)"/>
<rect x="92" y="58" width="4" height="16" fill="#22368f" opacity="0.6"/>
<rect x="92.4" y="58.4" width="12.2" height="15.2" fill="none" stroke="#1e2f88" stroke-width="0.8"/>
<path d="M96.6 62.6 C96.6 59.8 102 59.6 102 62.6 C102 64.8 99.4 65.2 99.4 68.3" fill="none" stroke="#fff" stroke-width="1.9"/>
<rect x="98.3" y="70" width="2.1" height="2.1" fill="#fff"/>
<!-- icon 7 -->
<rect x="114.5" y="61.5" width="15" height="12" fill="#fff" stroke="#7d858f" stroke-width="1"/>
<rect x="116" y="62.5" width="9" height="1" fill="#aab0b8"/><rect x="126" y="62.5" width="1" height="1" fill="#7d858f"/><rect x="128" y="62.5" width="1" height="1" fill="#7d858f"/>
<rect x="114.5" y="64.5" width="15" height="1" fill="#7d858f"/>
<rect x="123.5" y="65" width="1" height="8.5" fill="#7d858f"/>
<rect x="125.5" y="67" width="2" height="1" fill="#3d8ad8"/><rect x="125.5" y="69" width="2" height="1" fill="#3d8ad8"/><rect x="125.5" y="71" width="2" height="1" fill="#3d8ad8"/>
<rect x="115" y="65.5" width="8.5" height="7.5" fill="#f0f0f0"/>
<path d="M121.2 69 L117.8 65.8 L117.8 72.2 Z" fill="#3cb93c"/>
<!-- magnifier disk -->
<rect x="146" y="61" width="14" height="4" fill="#d4d7db"/>
<rect x="146" y="64.5" width="14" height="3.5" fill="#2e2e2e"/>
<rect x="156" y="65.5" width="2" height="1.6" fill="#3ef03e"/>
<circle cx="151.5" cy="67" r="3.2" fill="#a9c2dc" stroke="#6f8aa6" stroke-width="0.8"/>
<path d="M149.3 69.5 L145.5 73.3" stroke="#4a5a6a" stroke-width="1.2"/>
<!-- doc check -->
<path d="M170.5 58.5 L179.5 58.5 L181.5 60.5 L181.5 73.5 L170.5 73.5 Z" fill="#f6f7f8" stroke="#7a7a7a" stroke-width="1"/>
<path d="M172.3 66.3 L175 69.2 L180 63.8" fill="none" stroke="#f05a1a" stroke-width="1.6"/>
<!-- checklist -->
<rect x="191.5" y="60.5" width="15" height="11" fill="#fff" stroke="#707070" stroke-width="1"/>
<rect x="191" y="60" width="16" height="1.8" fill="#707070"/>
<path d="M194 63.8 L195.5 65 L197.8 62.6" fill="none" stroke="#3a8fe0" stroke-width="1.1"/>
<path d="M194 67.6 L195.5 68.8 L197.8 66.4" fill="none" stroke="#3a8fe0" stroke-width="1.1"/>
<rect x="199" y="64" width="5" height="1" fill="#a8a8a8"/>
<rect x="199" y="68" width="5" height="1" fill="#a8a8a8"/>
</svg>

<div id="win"></div>
</body></html>
